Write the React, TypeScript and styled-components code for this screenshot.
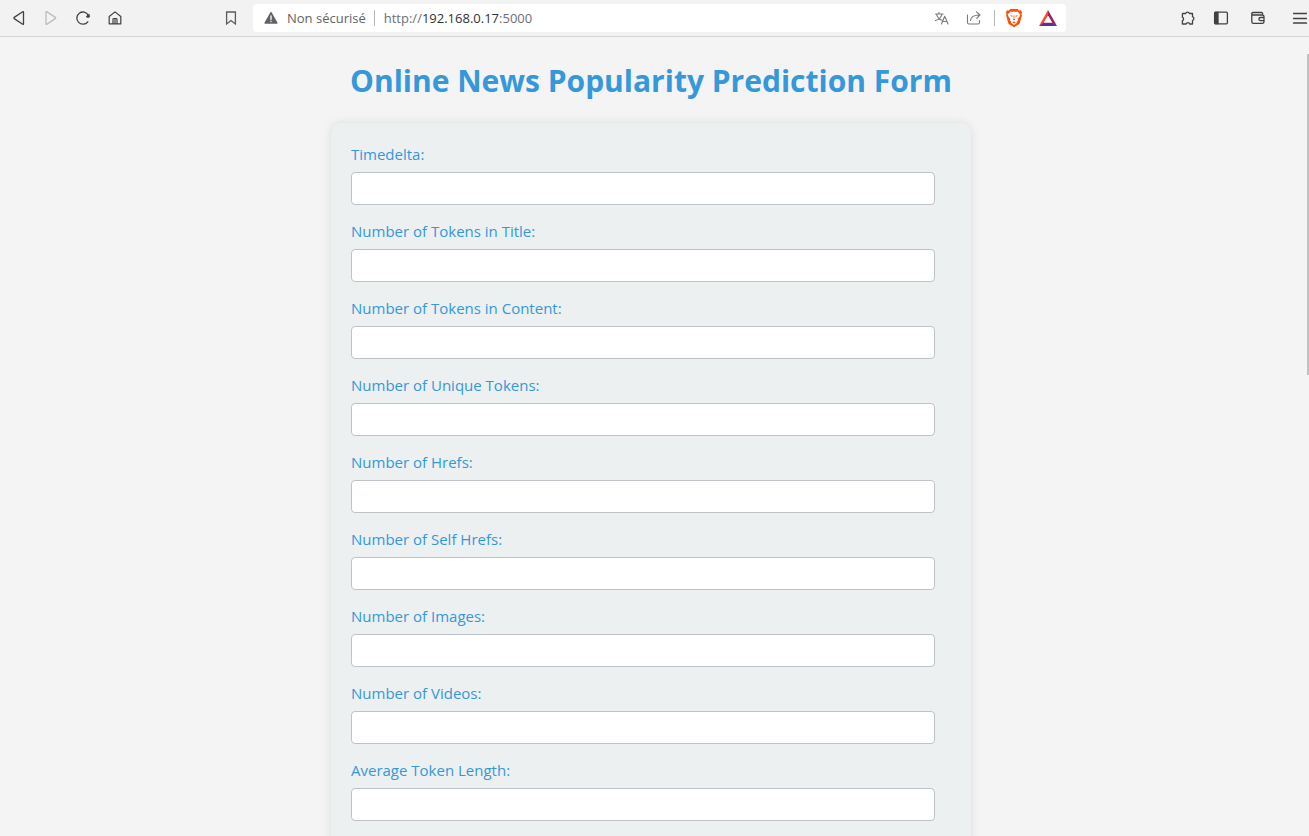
import React from "react";
import styled, { createGlobalStyle } from "styled-components";

const GlobalStyle = createGlobalStyle`
  * { box-sizing: border-box; }
  body {
    margin: 0;
    background: #f4f4f4;
    font-family: "Segoe UI", "Open Sans", "Noto Sans", sans-serif;
  }
`;

const Window = styled.div`
  display: flex;
  flex-direction: column;
  height: 100vh;
  overflow: hidden;
`;

const Toolbar = styled.header`
  display: grid;
  grid-template-columns: 253px 1fr 243px;
  align-items: center;
  flex: none;
  height: 37px;
  background: #f2f2f2;
  border-bottom: 1px solid #d2d7db;
`;

const ToolGroup = styled.div<{ $end?: boolean }>`
  display: flex;
  align-items: center;
  gap: ${(p) => (p.$end ? 9 : 8)}px;
  padding-left: 7px;
  justify-content: ${(p) => (p.$end ? "flex-end" : "flex-start")};
`;

const IconButton = styled.button<{ $color?: string; $width?: number }>`
  display: grid;
  place-items: center;
  width: ${(p) => p.$width ?? 24}px;
  height: 24px;
  padding: 0;
  border: 0;
  background: none;
  color: ${(p) => p.$color ?? "#3f4145"};
`;

const MenuButton = styled(IconButton)`
  margin-left: 8px;
`;

const BookmarkSlot = styled.div`
  margin-left: auto;
  padding-right: 10px;
`;

const AddressBar = styled.div`
  display: flex;
  align-items: center;
  height: 28px;
  padding: 0 6px 0 10px;
  border-radius: 4px;
  background: #fff;
  font-size: 13px;
  line-height: 18px;
  color: #5f6368;
`;

const Security = styled.button`
  display: flex;
  align-items: center;
  gap: 8px;
  padding: 0;
  border: 0;
  background: none;
  font: inherit;
  color: inherit;
`;

const Divider = styled.span`
  width: 1px;
  height: 16px;
  margin: 0 7px 0 8px;
  background: #b4b6b9;
`;

const Address = styled.span`
  flex: 1;
  padding-left: 2px;
  color: #6b6f74;
`;

const Host = styled.span`
  color: #303236;
`;

const AddressActions = styled.div<{ $gap: number }>`
  display: flex;
  align-items: center;
  gap: ${(p) => p.$gap}px;
`;

const Viewport = styled.div`
  display: flex;
  flex: 1;
  min-height: 0;
`;

const Page = styled.main`
  flex: 1;
  overflow: hidden;
  padding: 0 20px;
`;

const Track = styled.div`
  flex: none;
  width: 7px;
  padding: 17px 0 0 5px;
`;

const Thumb = styled.div`
  height: 41%;
  background: #c1c1c1;
`;

const Title = styled.h1`
  margin: 22px 0 20px;
  font-size: 30px;
  line-height: 44px;
  font-weight: 700;
  text-align: center;
  color: #3498db;
`;

const Form = styled.form`
  max-width: 640px;
  margin: 0 auto;
  padding: 20px 36px 20px 20px;
  border-radius: 10px;
  background: #ecf0f1;
  box-shadow: 0 0 10px rgba(0, 0, 0, 0.1);
`;

const Field = styled.div`
  display: flex;
  flex-direction: column;
  gap: 6px;
  margin-bottom: 15px;
`;

const Label = styled.label`
  font-size: 15px;
  line-height: 23px;
  color: #3498db;
`;

const Input = styled.input`
  width: 100%;
  height: 33px;
  padding: 8px;
  border: 1px solid #bdc3c7;
  border-radius: 4px;
  background: #fff;
  font: inherit;
`;

const Icon = ({ children, stroke = 1.3 }: { children: React.ReactNode; stroke?: number }) => (
  <svg width="16" height="16" viewBox="0 0 16 16" fill="none" stroke="currentColor" strokeWidth={stroke} strokeLinecap="round" strokeLinejoin="round" aria-hidden="true">
    {children}
  </svg>
);

const fields = [
  ["timedelta", "Timedelta:"],
  ["n_tokens_title", "Number of Tokens in Title:"],
  ["n_tokens_content", "Number of Tokens in Content:"],
  ["n_unique_tokens", "Number of Unique Tokens:"],
  ["num_hrefs", "Number of Hrefs:"],
  ["num_self_hrefs", "Number of Self Hrefs:"],
  ["num_imgs", "Number of Images:"],
  ["num_videos", "Number of Videos:"],
  ["average_token_length", "Average Token Length:"],
];

export default function App() {
  return (
    <Window>
      <GlobalStyle />
      <Toolbar>
        <ToolGroup>
          <IconButton aria-label="Back">
            <Icon><path d="M12.500 2.200v11.600q0 .9-.8.4L3.200 8.600q-.8-.6 0-1.200l8.500-5.600q.8-.5.8.4z" /></Icon>
          </IconButton>
          <IconButton aria-label="Forward" $color="#b9babc">
            <Icon><path d="M3 2.200v11.600q0 .9.8.4l8.500-5.600q.8-.6 0-1.200L3.800 1.800q-.8-.5-.8.4z" /></Icon>
          </IconButton>
          <IconButton aria-label="Reload">
            <Icon>
              <path d="M12.800 11.800A6.100 6.100 0 1 1 13.300 5.200" />
              <circle cx="13" cy="6.300" r="1.500" fill="currentColor" stroke="none" />
              <path d="M14 4.500v2.200h-2.200" />
            </Icon>
          </IconButton>
          <IconButton aria-label="Home">
            <Icon stroke={1.2}>
              <path d="M2.200 6.500 8 1.900l5.800 4.600v7.300H2.200z" />
              <path d="M6 13.500V9.300q0-.8.8-.8h2.400q.8 0 .8.8v4.200M8 8.800v4.700" />
            </Icon>
          </IconButton>
          <BookmarkSlot>
            <IconButton aria-label="Bookmark" $color="#5a5c60">
              <Icon><path d="M3.600 2h8.800v12L8 10.500 3.600 14z" strokeLinejoin="miter" /></Icon>
            </IconButton>
          </BookmarkSlot>
        </ToolGroup>

        <AddressBar>
          <Security>
            <Icon>
              <path d="M8 2.500 14 13H2z" fill="currentColor" />
              <path d="M8 6v3.500M8 11.400v.2" stroke="#fff" />
            </Icon>
            Non sécurisé
          </Security>
          <Divider />
          <Address>
            http://<Host>192.168.0.17</Host>:5000
          </Address>
          <AddressActions $gap={8}>
            <IconButton aria-label="Translate" $color="#777a7e">
              <Icon stroke={1.1}>
                <path d="M1.500 4h7.500M4.800 2.500l.7 1.500M2.500 4.300Q4 9 8 10.300M8 4.300Q6.500 9 1.500 10.500" />
                <path d="m7.500 14 3.200-7.800L14 14M8.700 11.500h4.200" />
              </Icon>
            </IconButton>
            <IconButton aria-label="Share" $color="#777a7e">
              <Icon stroke={1.1}>
                <path d="M1.500 5v7.500q0 1.500 1.500 1.500h9q1.500 0 1.500-1.500v-2" />
                <path d="M4.500 10.500Q5 5 13.500 5M10.500 1.800 13.900 5l-3.200 3.300" />
              </Icon>
            </IconButton>
          </AddressActions>
          <Divider />
          <AddressActions $gap={10}>
            <IconButton aria-label="Brave Shields">
              <svg width="18" height="20" viewBox="0 0 18 20" aria-hidden="true">
                <path d="M5.200 1h7.600l1.300 1.500 1.700-.2 1.300 2-.6 1.700.3 1.800-2 7.200q-.4 1-1.300 1.600L9 19.300l-4.500-2.700q-.9-.6-1.300-1.600l-2-7.200.3-1.800-.6-1.700 1.300-2 1.700.2z" fill="#ff500a" />
                <path d="m5.500 3.400 1.800.5L9 3.500l1.700.4 1.800-.5L15.200 6.600l-.7 1.900-1.800 2.500.3 1.700-1.500 1.100.5 1L9 17l-3-2.200.5-1L5 12.700l.3-1.700-1.800-2.500-.7-1.900z" fill="#fff" />
                <path d="m5 7 2.600.8-.6 1.200zM13 7l-2.600.8.6 1.200zM8.500 7.500h1l-.2 3.300 1 .8L9 12.600l-1.300-1 1-.8zM7.200 14.300l1.800-.8 1.800.8L9 15.600z" fill="#ff500a" />
              </svg>
            </IconButton>
            <IconButton aria-label="Brave Rewards">
              <svg width="18" height="16" viewBox="0 0 18 16" aria-hidden="true">
                <path d="M9 0 0 16l4.400-2.700L9 5.200z" fill="#ff4724" />
                <path d="m9 0 9 16-4.400-2.700L9 5.200z" fill="#9e1f63" />
                <path d="m0 16 4.400-3.200h9.200L18 16z" fill="#662d91" />
              </svg>
            </IconButton>
          </AddressActions>
        </AddressBar>

        <ToolGroup $end>
          <IconButton aria-label="Extensions">
            <Icon>
              <path d="M3 3.500h2.700a2 2 0 0 1 3.800 0h3v3.200a2 2 0 0 1 0 3.800V14H9.700a1.900 1.900 0 0 0-3.600 0H2.400v-3.300a1.900 1.900 0 0 0 0-3.500V4.100q0-.6.6-.6z" />
            </Icon>
          </IconButton>
          <IconButton aria-label="Sidebar">
            <Icon>
              <rect x="1.600" y="2.200" width="12.800" height="11.600" rx="1" />
              <path d="M2 2.500h3v11H2z" fill="currentColor" />
            </Icon>
          </IconButton>
          <IconButton aria-label="Wallet" $width={32}>
            <Icon>
              <path d="M1.800 4v7.700q0 1.700 1.700 1.700h8.800q1.700 0 1.700-1.700V6.500q0-1.500-1.700-1.500H3Q1.800 5 1.800 3.700 1.800 2.500 3 2.500h8.500q1 0 1.200 1.200M14 7.500h-3.500a1.600 1.600 0 0 0 0 3.200H14" />
            </Icon>
          </IconButton>
          <MenuButton aria-label="Menu" $width={18}>
            <Icon><path d="M1.500 3.500h13M1.500 8.500h13M1.500 13h13" /></Icon>
          </MenuButton>
        </ToolGroup>
      </Toolbar>

      <Viewport>
        <Page>
          <Title>Online News Popularity Prediction Form</Title>
          <Form>
            {fields.map(([id, label]) => (
              <Field key={id}>
                <Label htmlFor={id}>{label}</Label>
                <Input id={id} name={id} type="text" />
              </Field>
            ))}
          </Form>
        </Page>
        <Track>
          <Thumb />
        </Track>
      </Viewport>
    </Window>
  );
}
